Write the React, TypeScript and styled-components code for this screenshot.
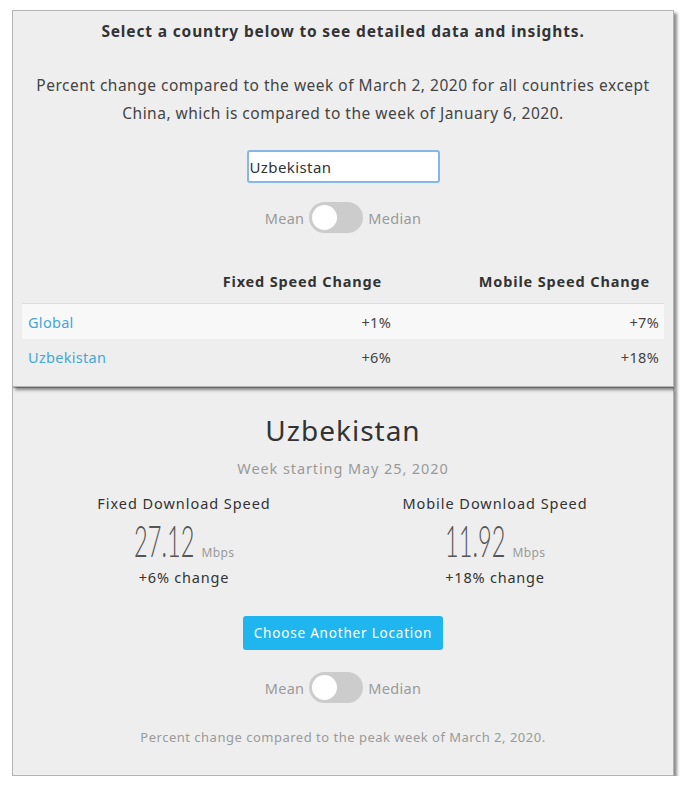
import React, { useState } from "react";
import styled, { createGlobalStyle } from "styled-components";

const GlobalStyle = createGlobalStyle`
  body {
    margin: 0;
    background: #ffffff;
    font-family: "Noto Sans", "Open Sans", sans-serif;
    color: #3a3a3a;
  }
`;

const Page = styled.div`
  width: 690px;
  padding: 10px 0 0 12px;
  box-sizing: border-box;
`;

const Panel = styled.section<{ $height: number; $raised?: boolean }>`
  width: 662px;
  height: ${({ $height }) => $height}px;
  box-sizing: border-box;
  background: #eeeeee;
  border: 1px solid #b4b4b4;
  box-shadow: 3px 3px 3px rgba(0, 0, 0, 0.45);
  display: flex;
  flex-direction: column;
  align-items: center;
  position: relative;
  z-index: ${({ $raised }) => ($raised ? 2 : 1)};
`;

const Heading = styled.h2`
  margin: 10px 0 0;
  font-size: 15.5px;
  line-height: 20px;
  font-weight: 700;
  letter-spacing: 0.85px;
  color: #333;
`;

const Intro = styled.p`
  margin: 30px 0 0;
  font-size: 15.5px;
  line-height: 28px;
  text-align: center;
  letter-spacing: 0.5px;
  color: #444;
`;

const SearchInput = styled.input`
  margin-top: 23px;
  width: 193px;
  height: 33px;
  box-sizing: border-box;
  border: 2px solid #86b6e6;
  border-radius: 3px;
  background: #fff;
  padding: 0 1px;
  font-family: inherit;
  font-size: 15px;
  letter-spacing: 0.4px;
  color: #333;
  outline: none;
`;

const ToggleRow = styled.div<{ $top: number }>`
  margin-top: ${({ $top }) => $top}px;
  display: flex;
  align-items: center;
  gap: 5px;
  font-size: 14.5px;
  letter-spacing: 0.3px;
  color: #9a9a9a;
`;

const Track = styled.button`
  width: 54px;
  height: 31px;
  border: none;
  border-radius: 16px;
  background: #cccccc;
  padding: 0 0 0 3px;
  display: flex;
  align-items: center;
  cursor: pointer;
`;

const Knob = styled.span<{ $on: boolean }>`
  width: 25px;
  height: 25px;
  border-radius: 50%;
  background: #fff;
  transform: translateX(${({ $on }) => ($on ? 23 : 0)}px);
  transition: transform 0.2s;
`;

const Table = styled.div`
  margin-top: 31px;
  width: 642px;
  display: grid;
  grid-template-columns: 150px 224px 268px;
`;

const HeadCell = styled.div`
  height: 39px;
  display: flex;
  align-items: center;
  justify-content: flex-end;
  padding: 0 14px 6px 0;
  box-sizing: border-box;
  font-size: 14.5px;
  font-weight: 700;
  letter-spacing: 0.85px;
  color: #333;
`;

const Cell = styled.div<{ $shaded: boolean; $first?: boolean }>`
  height: 36px;
  display: flex;
  align-items: center;
  justify-content: ${({ $first }) => ($first ? "flex-start" : "flex-end")};
  padding: ${({ $first }) => ($first ? "0 0 0 6px" : "0 5px 0 0")};
  background: ${({ $shaded }) => ($shaded ? "#f8f8f8" : "transparent")};
  border-top: ${({ $shaded }) => ($shaded ? "1px solid #dedede" : "none")};
  box-sizing: border-box;
  font-size: 14.5px;
  letter-spacing: 0.3px;
  color: #444;
`;

const CountryLink = styled.a`
  color: #44a7d8;
  text-decoration: none;
`;

const Title = styled.h1`
  margin: 25px 0 0;
  font-size: 28px;
  line-height: 34px;
  font-weight: 400;
  letter-spacing: 1px;
  color: #333;
`;

const Week = styled.div`
  margin-top: 11px;
  font-size: 14.5px;
  line-height: 20px;
  letter-spacing: 0.9px;
  color: #9a9a9a;
`;

const Stats = styled.div`
  margin-top: 15px;
  width: 100%;
  display: grid;
  grid-template-columns: 342px 1fr;
  padding: 0 38px 0 0;
  box-sizing: border-box;
`;

const Stat = styled.div`
  display: flex;
  flex-direction: column;
  align-items: center;
`;

const StatLabel = styled.div`
  font-size: 14.5px;
  line-height: 20px;
  letter-spacing: 0.95px;
  color: #333;
`;

const Value = styled.div`
  margin-top: 6px;
  display: flex;
  align-items: baseline;
  gap: 7px;
  height: 44px;
`;

const NumberBox = styled.span`
  display: inline-block;
  width: 61px;
  white-space: nowrap;
`;

const Number = styled.span`
  display: inline-block;
  font-family: Lato, "DejaVu Sans", sans-serif;
  font-weight: 300;
  font-size: 43px;
  line-height: 44px;
  color: #555;
  transform: scaleX(0.55);
  transform-origin: left bottom;
`;

const Unit = styled.span`
  font-size: 12px;
  letter-spacing: 0.4px;
  color: #9a9a9a;
`;

const Change = styled.div`
  margin-top: 4px;
  font-size: 14.5px;
  line-height: 20px;
  letter-spacing: 0.8px;
  color: #333;
`;

const ActionButton = styled.button`
  margin-top: 29px;
  width: 200px;
  height: 34px;
  border: none;
  border-radius: 3px;
  background: #1fb6ef;
  color: #fff;
  font-family: inherit;
  font-size: 13.5px;
  letter-spacing: 0.8px;
  cursor: pointer;
`;

const Footnote = styled.p`
  margin: 25px 0 0;
  font-size: 13px;
  line-height: 18px;
  letter-spacing: 0.5px;
  color: #9a9a9a;
`;

const Toggle = ({ top }: { top: number }) => {
  const [on, setOn] = useState(false);
  return (
    <ToggleRow $top={top}>
      <span>Mean</span>
      <Track onClick={() => setOn(!on)} aria-label="Mean or median">
        <Knob $on={on} />
      </Track>
      <span>Median</span>
    </ToggleRow>
  );
};

const rows = [
  { name: "Global", fixed: "+1%", mobile: "+7%" },
  { name: "Uzbekistan", fixed: "+6%", mobile: "+18%" },
];

export default function App() {
  const [country, setCountry] = useState("Uzbekistan");
  return (
    <Page>
      <GlobalStyle />
      <Panel $height={377} $raised>
        <Heading>Select a country below to see detailed data and insights.</Heading>
        <Intro>
          Percent change compared to the week of March 2, 2020 for all countries except
          <br />
          China, which is compared to the week of January 6, 2020.
        </Intro>
        <SearchInput value={country} onChange={(e) => setCountry(e.target.value)} />
        <Toggle top={19} />
        <Table>
          <HeadCell />
          <HeadCell>Fixed Speed Change</HeadCell>
          <HeadCell>Mobile Speed Change</HeadCell>
          {rows.map((r, i) => (
            <React.Fragment key={r.name}>
              <Cell $shaded={i === 0} $first>
                <CountryLink href="#">{r.name}</CountryLink>
              </Cell>
              <Cell $shaded={i === 0}>{r.fixed}</Cell>
              <Cell $shaded={i === 0}>{r.mobile}</Cell>
            </React.Fragment>
          ))}
        </Table>
      </Panel>
      <Panel $height={389}>
        <Title>Uzbekistan</Title>
        <Week>Week starting May 25, 2020</Week>
        <Stats>
          <Stat>
            <StatLabel>Fixed Download Speed</StatLabel>
            <Value>
              <NumberBox>
                <Number>27.12</Number>
              </NumberBox>
              <Unit>Mbps</Unit>
            </Value>
            <Change>+6% change</Change>
          </Stat>
          <Stat>
            <StatLabel>Mobile Download Speed</StatLabel>
            <Value>
              <NumberBox>
                <Number>11.92</Number>
              </NumberBox>
              <Unit>Mbps</Unit>
            </Value>
            <Change>+18% change</Change>
          </Stat>
        </Stats>
        <ActionButton>Choose Another Location</ActionButton>
        <Toggle top={22} />
        <Footnote>Percent change compared to the peak week of March 2, 2020.</Footnote>
      </Panel>
    </Page>
  );
}
